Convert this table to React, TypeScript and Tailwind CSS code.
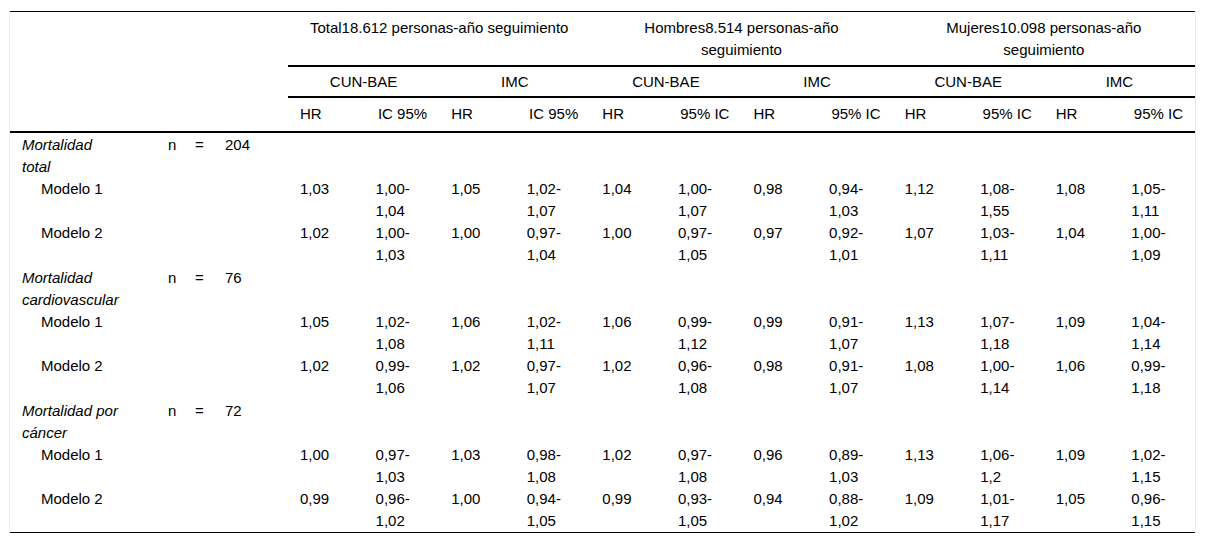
type Pair = [string, string];
type Row = { label: string; vals: Pair[] };

const groups = [
  "Total18.612 personas-año seguimiento",
  "Hombres8.514 personas-año seguimiento",
  "Mujeres10.098 personas-año seguimiento",
];

const sections: { title: string; n: string; rows: Row[] }[] = [
  {
    title: "Mortalidad total",
    n: "204",
    rows: [
      { label: "Modelo 1", vals: [["1,03", "1,00-1,04"], ["1,05", "1,02-1,07"], ["1,04", "1,00-1,07"], ["0,98", "0,94-1,03"], ["1,12", "1,08-1,55"], ["1,08", "1,05-1,11"]] },
      { label: "Modelo 2", vals: [["1,02", "1,00-1,03"], ["1,00", "0,97-1,04"], ["1,00", "0,97-1,05"], ["0,97", "0,92-1,01"], ["1,07", "1,03-1,11"], ["1,04", "1,00-1,09"]] },
    ],
  },
  {
    title: "Mortalidad cardiovascular",
    n: "76",
    rows: [
      { label: "Modelo 1", vals: [["1,05", "1,02-1,08"], ["1,06", "1,02-1,11"], ["1,06", "0,99-1,12"], ["0,99", "0,91-1,07"], ["1,13", "1,07-1,18"], ["1,09", "1,04-1,14"]] },
      { label: "Modelo 2", vals: [["1,02", "0,99-1,06"], ["1,02", "0,97-1,07"], ["1,02", "0,96-1,08"], ["0,98", "0,91-1,07"], ["1,08", "1,00-1,14"], ["1,06", "0,99-1,18"]] },
    ],
  },
  {
    title: "Mortalidad por cáncer",
    n: "72",
    rows: [
      { label: "Modelo 1", vals: [["1,00", "0,97-1,03"], ["1,03", "0,98-1,08"], ["1,02", "0,97-1,08"], ["0,96", "0,89-1,03"], ["1,13", "1,06-1,2"], ["1,09", "1,02-1,15"]] },
      { label: "Modelo 2", vals: [["0,99", "0,96-1,02"], ["1,00", "0,94-1,05"], ["0,99", "0,93-1,05"], ["0,94", "0,88-1,02"], ["1,09", "1,01-1,17"], ["1,05", "0,96-1,15"]] },
    ],
  },
];

function Range({ v }: { v: string }) {
  const [a, b] = v.split("-");
  return (
    <>
      {a}-<br />
      {b}
    </>
  );
}

export default function App() {
  return (
    <div
      className="bg-white pt-[11px] px-[9px] text-black text-[15px] leading-[22px]"
      style={{ fontFamily: '"Liberation Sans", Arial, sans-serif' }}
    >
      <div className="border-x border-[#ececec]">
        <table className="w-full table-fixed border-collapse">
          <colgroup>
            <col className="w-[146px]" />
            <col className="w-[25px]" />
            <col className="w-[31px]" />
            <col className="w-[76px]" />
            {Array.from({ length: 12 }).map((_, i) => (
              <col key={i} />
            ))}
          </colgroup>
          <thead>
            <tr className="border-t border-black">
              <th colSpan={4} className="font-normal" />
              {groups.map((g) => (
                <th key={g} colSpan={4} className="font-normal text-center px-3 pt-[5px] pb-[4px] border-b-2 border-black align-top">
                  {g}
                </th>
              ))}
            </tr>
            <tr>
              <th colSpan={4} className="font-normal" />
              {[0, 1, 2].map((i) => (
                <>
                  <th key={`c${i}`} colSpan={2} className="font-normal text-center px-3 pt-[4px] pb-[3px] border-b-2 border-black">
                    CUN-BAE
                  </th>
                  <th key={`i${i}`} colSpan={2} className="font-normal text-center px-3 pt-[4px] pb-[3px] border-b-2 border-black">
                    IMC
                  </th>
                </>
              ))}
            </tr>
            <tr className="border-b-2 border-black">
              <th colSpan={4} className="font-normal" />
              {[0, 1, 2, 3, 4, 5].map((i) => (
                <>
                  <th key={`h${i}`} className="font-normal text-left px-3 pt-[5px] pb-[6px]">
                    HR
                  </th>
                  <th key={`r${i}`} className="font-normal text-right px-3 pt-[5px] pb-[6px]">
                    {i < 2 ? "IC 95%" : "95% IC"}
                  </th>
                </>
              ))}
            </tr>
          </thead>
          <tbody className="border-b border-black">
            {sections.map((s) => (
              <>
                <tr key={s.title}>
                  <td className="pl-3 pt-px align-top">
                    <div className="w-[99px] italic">{s.title}</div>
                  </td>
                  <td className="pl-3 pt-px align-top">n</td>
                  <td className="pl-[14px] pt-px align-top">=</td>
                  <td className="pl-[13px] pt-px align-top">{s.n}</td>
                  <td colSpan={12} />
                </tr>
                {s.rows.map((r) => (
                  <tr key={s.title + r.label}>
                    <td className="pl-[31px] align-top">{r.label}</td>
                    <td />
                    <td />
                    <td />
                    {r.vals.map(([hr, ci], i) => (
                      <>
                        <td key={`h${i}`} className="px-3 align-top">{hr}</td>
                        <td key={`c${i}`} className="px-3 align-top">
                          <Range v={ci} />
                        </td>
                      </>
                    ))}
                  </tr>
                ))}
              </>
            ))}
          </tbody>
        </table>
      </div>
    </div>
  );
}
